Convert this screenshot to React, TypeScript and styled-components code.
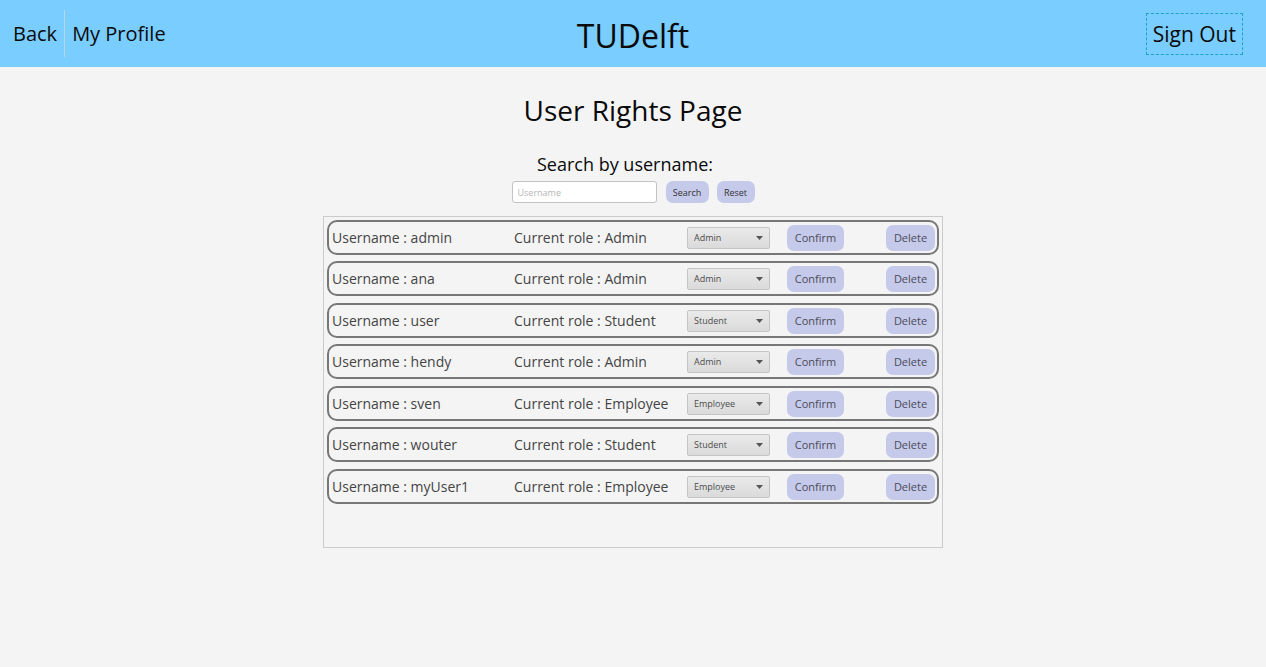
import React, { useState } from "react";
import styled, { createGlobalStyle } from "styled-components";

const GlobalStyle = createGlobalStyle`
  *, *::before, *::after { box-sizing: border-box; }
  body {
    margin: 0;
    background: #f4f4f4;
    color: #0a0a0a;
    font-family: "Segoe UI", "Open Sans", "Noto Sans", sans-serif;
  }
  button, input, select { font-family: inherit; }
`;

const Header = styled.header`
  display: grid;
  grid-template-columns: 1fr auto 1fr;
  align-items: center;
  height: 67px;
  padding: 0 23px 0 6px;
  background: #7acdff;
`;

const Nav = styled.nav`
  display: flex;
  align-items: center;
`;

const HeaderButton = styled.button<{ $outlined?: boolean }>`
  height: 42px;
  padding: 0 6px;
  border: 1px dashed ${(p) => (p.$outlined ? "#1fa3c4" : "transparent")};
  background: none;
  color: inherit;
  font-size: ${(p) => (p.$outlined ? 21 : 20)}px;
  line-height: 28px;
  white-space: nowrap;
  cursor: pointer;
`;

const Divider = styled.span`
  width: 1px;
  height: 47px;
  background: #b5d5e6;
`;

const Brand = styled.span`
  padding: 4px 0 0 17px;
  font-size: 32px;
  line-height: 44px;
`;

const HeaderEnd = styled.div`
  display: flex;
  justify-content: flex-end;
`;

const Main = styled.main`
  display: flex;
  flex-direction: column;
  align-items: center;
  padding: 23px 16px;
`;

const Title = styled.h1`
  margin: 0 0 20px;
  font-size: 28px;
  font-weight: 400;
  line-height: 40px;
`;

const SearchForm = styled.form`
  display: flex;
  flex-direction: column;
  align-items: center;
`;

const SearchLabel = styled.label`
  padding-right: 16px;
  font-size: 18px;
  line-height: 28px;
`;

const SearchRow = styled.div`
  display: flex;
  gap: 8px;
  margin-top: 3px;
`;

const SearchInput = styled.input`
  width: 145px;
  height: 22px;
  margin-right: 1px;
  padding: 0 5px;
  border: 1px solid #c3c3c3;
  border-radius: 3px;
  background: #fff;
  color: #333;
  font-size: 9px;
  outline: none;
  &::placeholder { color: #b5b5b5; opacity: 1; }
`;

const PillButton = styled.button<{ $small?: boolean; $width: number }>`
  width: ${(p) => p.$width}px;
  height: ${(p) => (p.$small ? 22 : 26)}px;
  padding: 0;
  border: 0;
  border-radius: 7px;
  background: #c5c9ea;
  color: ${(p) => (p.$small ? "#333" : "#4c4c58")};
  font-size: ${(p) => (p.$small ? 9 : 11)}px;
  cursor: pointer;
`;

const UserList = styled.ul`
  width: 100%;
  max-width: 620px;
  min-height: 332px;
  margin: 13px 0 0;
  padding: 3px;
  border: 1px solid #cbcbcb;
  list-style: none;
`;

const UserRow = styled.li`
  display: grid;
  grid-template-columns: 182px 173px 100px 1fr auto;
  align-items: center;
  height: 35px;
  padding: 0 2px 0 3px;
  border: 2px solid #777;
  border-radius: 10px;
  color: #444;
  font-size: 14px;
  line-height: 20px;
  white-space: nowrap;
  & + & { margin-top: 6px; }
  &:nth-child(2n + 3) { margin-top: 7px; }
`;

const SelectWrap = styled.div`
  display: grid;
  align-items: center;
  width: 83px;
  & > * { grid-area: 1 / 1; }
`;

const RoleSelect = styled.select`
  width: 100%;
  height: 22px;
  padding: 0 6px;
  border: 1px solid #c4c4c4;
  border-radius: 2px;
  background: linear-gradient(#eaeaea, #dadada);
  color: #4c4c4c;
  font-size: 9px;
  appearance: none;
`;

const Arrow = styled.svg`
  justify-self: end;
  width: 7px;
  height: 4px;
  margin-right: 7px;
  fill: #555;
  pointer-events: none;
`;

type Role = "Admin" | "Student" | "Employee";

const users: { name: string; role: Role }[] = [
  { name: "admin", role: "Admin" },
  { name: "ana", role: "Admin" },
  { name: "user", role: "Student" },
  { name: "hendy", role: "Admin" },
  { name: "sven", role: "Employee" },
  { name: "wouter", role: "Student" },
  { name: "myUser1", role: "Employee" },
];

function User({ name, role }: { name: string; role: Role }) {
  const [selected, setSelected] = useState<string>(role);
  return (
    <UserRow>
      <span>Username : {name}</span>
      <span>Current role : {role}</span>
      <SelectWrap>
        <RoleSelect
          aria-label={`Role of ${name}`}
          value={selected}
          onChange={(e) => setSelected(e.target.value)}
        >
          <option>Admin</option>
          <option>Student</option>
          <option>Employee</option>
        </RoleSelect>
        <Arrow viewBox="0 0 7 4" aria-hidden="true">
          <path d="M0 0H7L3.5 4Z" />
        </Arrow>
      </SelectWrap>
      <PillButton type="button" $width={57}>Confirm</PillButton>
      <PillButton type="button" $width={49}>Delete</PillButton>
    </UserRow>
  );
}

export default function App() {
  return (
    <>
      <GlobalStyle />
      <Header>
        <Nav>
          <HeaderButton type="button">Back</HeaderButton>
          <Divider />
          <HeaderButton type="button">My Profile</HeaderButton>
        </Nav>
        <Brand>TUDelft</Brand>
        <HeaderEnd>
          <HeaderButton type="button" $outlined>Sign Out</HeaderButton>
        </HeaderEnd>
      </Header>
      <Main>
        <Title>User Rights Page</Title>
        <SearchForm onSubmit={(e) => e.preventDefault()}>
          <SearchLabel htmlFor="username">Search by username:</SearchLabel>
          <SearchRow>
            <SearchInput id="username" type="text" placeholder="Username" />
            <PillButton type="submit" $small $width={43}>Search</PillButton>
            <PillButton type="reset" $small $width={38}>Reset</PillButton>
          </SearchRow>
        </SearchForm>
        <UserList>
          {users.map((u) => (
            <User key={u.name} {...u} />
          ))}
        </UserList>
      </Main>
    </>
  );
}
